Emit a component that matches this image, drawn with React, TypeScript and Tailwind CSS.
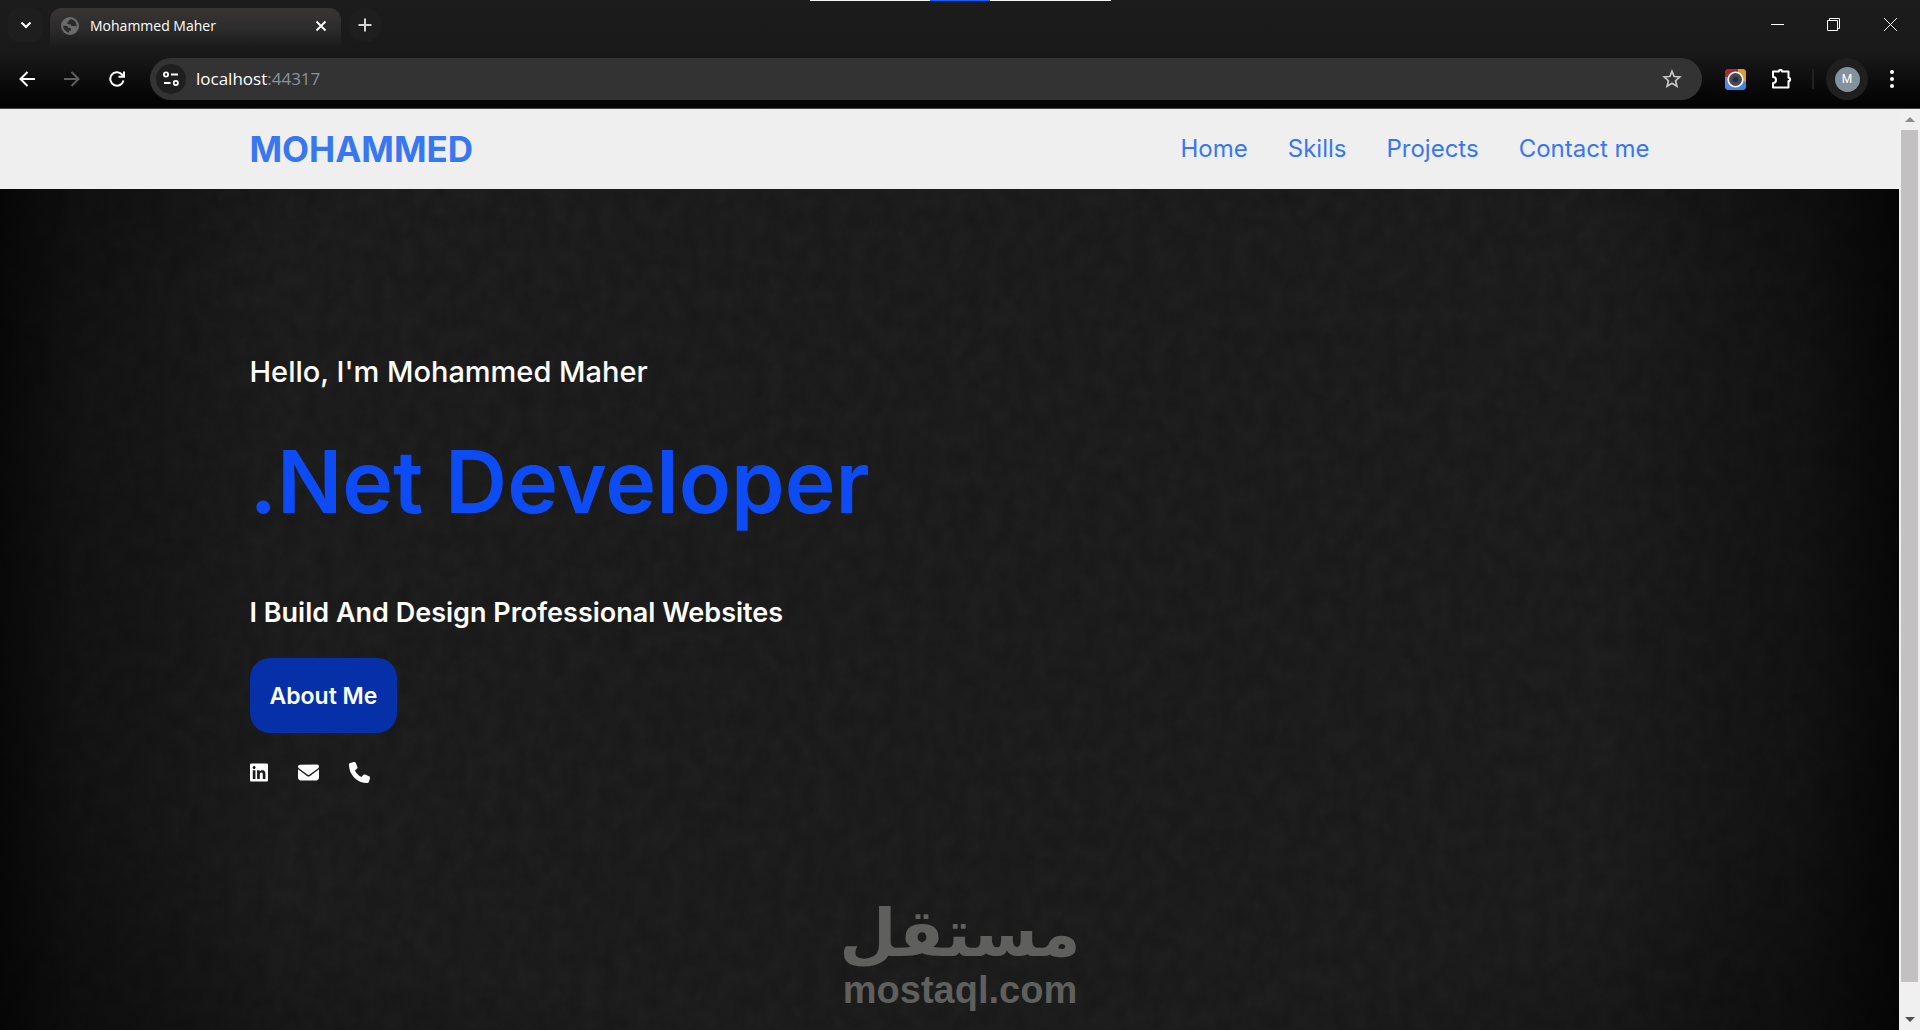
import React from 'react';
import { FaLinkedin, FaEnvelope, FaPhone } from 'react-icons/fa6';

const navLinks = [
  { label: 'Home', href: '#home' },
  { label: 'Skills', href: '#skills' },
  { label: 'Projects', href: '#projects' },
  { label: 'Contact me', href: '#contact' },
];

const socials = [
  { label: 'LinkedIn', href: '#linkedin', icon: <FaLinkedin className="w-[18px] h-[21px]" /> },
  { label: 'Email', href: '#email', icon: <FaEnvelope className="w-[21px] h-[21px]" /> },
  { label: 'Phone', href: '#phone', icon: <FaPhone className="w-[21px] h-[21px]" /> },
];

const TabStrip: React.FC = () => (
  <div className="relative flex items-center h-[50px] pl-2">
    <div className="absolute top-0 inset-x-0 mx-auto w-[301px] h-px bg-gray-100 flex justify-center">
      <div className="w-[60px] h-px bg-blue-600" />
    </div>
    <button aria-label="Search tabs" className="w-[35px] h-[34px] rounded-xl bg-[#1e1e1e] flex items-center justify-center">
      <svg className="w-3 h-3" viewBox="0 0 12 12" fill="none" stroke="white" strokeWidth="2.2">
        <path d="M1.500 3.500L6 8l4.500-4.500" />
      </svg>
    </button>
    <div className="ml-[7px] mt-2 h-[42px] w-[291px] pl-[11px] pr-3 pb-1.5 rounded-t-xl bg-gradient-to-b from-[#3a3535] via-[#2b2b2b] to-[#181818] flex items-center gap-[11px]">
      <svg className="w-[18px] h-[18px]" viewBox="0 0 18 18">
        <circle cx="9" cy="9" r="9" fill="#6b6b6b" />
        <path
          d="M10.500 2.300C9 2.200 7.800 3 7.600 4.200 7.500 5 6.200 5.200 6.200 6.200c0 .9 1 1 2.400 1 1.600 0 1.700 1 1.700 1.900h3.300c1 0 1.400.6 2 1 .4-3.500-1.200-6.600-5.100-7.800zM2.100 8.800c.2 3.600 2.600 6.100 6 6.800v-1.800c1.500 0 2-.7 2-1.600 0-1.200-1-1.500-2-1.500H7c-.1-1.400-1-1.900-2.200-1.900z"
          fill="#2b2b2b"
        />
      </svg>
      <span className="flex-1 text-sm text-white font-['Open_Sans',sans-serif]">Mohammed Maher</span>
      <button aria-label="Close tab" className="w-4 h-4 flex items-center justify-center">
        <svg className="w-3 h-3" viewBox="0 0 12 12" stroke="white" strokeWidth="1.800">
          <path d="M1.500 1.500l9 9M10.500 1.500l-9 9" />
        </svg>
      </button>
    </div>
    <button aria-label="New tab" className="ml-[7px] w-[34px] h-[34px] rounded-full bg-[#1e1e1e] flex items-center justify-center">
      <svg className="w-[14px] h-[14px]" viewBox="0 0 14 14" stroke="#d5d5d5" strokeWidth="2">
        <path d="M7 .5v13M.5 7h13" />
      </svg>
    </button>
    <div className="ml-auto flex h-[49px] self-start">
      <button aria-label="Minimize" className="w-14 flex items-center justify-center">
        <svg className="w-[13px] h-[13px]" viewBox="0 0 13 13" stroke="white">
          <path d="M0 6.500h13" />
        </svg>
      </button>
      <button aria-label="Restore" className="w-14 flex items-center justify-center">
        <svg className="w-[13px] h-[13px]" viewBox="0 0 13 13" fill="none" stroke="white">
          <path d="M.5 2.500h10v10h-10zM2.500 2.500v-2h10v10h-2" />
        </svg>
      </button>
      <button aria-label="Close" className="w-[59px] flex items-center justify-center">
        <svg className="w-[13px] h-[13px]" viewBox="0 0 13 13" stroke="white">
          <path d="M0 0l13 13M13 0L0 13" />
        </svg>
      </button>
    </div>
  </div>
);

const Toolbar: React.FC = () => (
  <div className="flex items-center h-[58px] pl-[11px] pr-4">
    <div className="flex items-center gap-[13px]">
      <button aria-label="Back" className="w-8 h-8 flex items-center justify-center">
        <svg className="w-4 h-4" viewBox="0 0 16 16" fill="none" stroke="white" strokeWidth="2">
          <path d="M16 8H2M8.500 1L1.500 8l7 7" />
        </svg>
      </button>
      <button aria-label="Forward" className="w-8 h-8 flex items-center justify-center">
        <svg className="w-4 h-4" viewBox="0 0 16 16" fill="none" stroke="#5f5f5f" strokeWidth="2">
          <path d="M0 8h14M7.500 1l7 7-7 7" />
        </svg>
      </button>
      <button aria-label="Reload" className="w-8 h-8 flex items-center justify-center">
        <svg className="w-4 h-4" viewBox="0 0 16 16" fill="none" stroke="white" strokeWidth="2">
          <path d="M14.500 9.500A6.700 6.700 0 1 1 13 3.500l1.500 1.800M15 .5v5.300H9.500" />
        </svg>
      </button>
    </div>
    <div className="ml-[17px] flex-1 h-[42px] rounded-full bg-[#333333] flex items-center pl-1.5 pr-5">
      <button aria-label="View site information" className="w-[30px] h-[30px] rounded-full bg-[#1f1f1f] flex items-center justify-center">
        <svg className="w-4 h-4" viewBox="0 0 16 16" fill="none" stroke="white" strokeWidth="1.800">
          <circle cx="3" cy="3.500" r="2.100" />
          <path d="M8 3.500h7M1 12h6.500" />
          <circle cx="12.800" cy="12" r="2.100" />
        </svg>
      </button>
      <div className="ml-2.5 flex-1 text-[17px] leading-6 text-white font-['Open_Sans',sans-serif]">
        localhost<span className="text-[#8a929c]">:44317</span>
      </div>
      <button aria-label="Bookmark this tab">
        <svg className="w-5 h-5" viewBox="0 0 20 20" fill="none" stroke="#c7c7c7" strokeWidth="1.700">
          <path d="M10 2.300l2.200 5.200 5.600.5-4.200 3.700 1.300 5.500-4.900-2.900-4.900 2.900 1.300-5.500L2.200 8l5.600-.5z" />
        </svg>
      </button>
    </div>
    <button aria-label="Screenshot extension" className="ml-[23px]">
      <svg className="w-[21px] h-[21px]" viewBox="0 0 21 21">
        <defs>
          <clipPath id="ext">
            <rect width="21" height="21" rx="4" />
          </clipPath>
        </defs>
        <g clipPath="url(#ext)">
          <rect width="21" height="21" fill="#3b7af0" />
          <path d="M0 0h14l-4 10H0z" fill="#b3262b" />
          <path d="M13 0h8v14l-8-4z" fill="#d9993c" />
          <path d="M0 8h10v13H0z" fill="#5b82e8" />
          <path d="M10 10l11 3v8H7z" fill="#3f86dd" />
        </g>
        <circle cx="10.500" cy="10.500" r="7.300" fill="#4a4a4e" stroke="white" strokeWidth="1.600" />
        <circle cx="10.500" cy="10.500" r="2.800" fill="#1d2b50" />
      </svg>
    </button>
    <button aria-label="Extensions" className="ml-[25px]">
      <svg className="w-[21px] h-[21px]" viewBox="0 0 21 21" fill="none" stroke="white" strokeWidth="2" strokeLinejoin="round">
        <path d="M2 2.500h5.800a1.600 1.600 0 0 1 3.200 0H17.500v6.300a1.600 1.600 0 0 1 0 3.200V18.500H2v-4.500a2.800 2.800 0 0 0 0-6z" />
      </svg>
    </button>
    <div className="ml-5 w-0.5 h-5 bg-[#222222]" />
    <button aria-label="Profile" className="ml-3 w-[42px] h-[42px] rounded-full bg-[#1f1f1f] flex items-center justify-center">
      <span className="w-[25px] h-[25px] rounded-full bg-[#84929b] text-white text-xs font-['Roboto',sans-serif] flex items-center justify-center">M</span>
    </button>
    <button aria-label="Menu" className="ml-3 w-6 flex justify-center">
      <svg className="w-1 h-[18px]" viewBox="0 0 4 18" fill="white">
        <circle cx="2" cy="2" r="2" />
        <circle cx="2" cy="9" r="2" />
        <circle cx="2" cy="16" r="2" />
      </svg>
    </button>
  </div>
);

const ScrollBar: React.FC = () => (
  <div className="w-[21px] shrink-0 bg-[#f0f0f0] flex flex-col items-center">
    <div className="h-[21px] flex items-center">
      <svg className="w-2.5 h-[5px]" viewBox="0 0 10 5" fill="#8b8b8b">
        <path d="M0 5l5-5 5 5z" />
      </svg>
    </div>
    <div className="w-[17px] flex-1 bg-[#c2c0c1]" />
    <div className="h-12 flex items-end pb-2">
      <svg className="w-2.5 h-[5px]" viewBox="0 0 10 5" fill="#505050">
        <path d="M0 0l5 5 5-5z" />
      </svg>
    </div>
  </div>
);

const Header: React.FC = () => (
  <header className="bg-[#efefef] px-6">
    <div className="mx-auto w-full max-w-[1400px] h-20 flex items-center justify-between text-[#3877f2]">
      <a href="#home" className="text-[35px] leading-10 font-bold">MOHAMMED</a>
      <nav className="flex gap-10">
        {navLinks.map((link) => (
          <a key={link.label} href={link.href} className="text-2xl">
            {link.label}
          </a>
        ))}
      </nav>
    </div>
  </header>
);

const Hero: React.FC = () => (
  <section className="relative flex-1 px-6 bg-[#1e1e1e] overflow-hidden">
    <svg className="absolute inset-0 w-full h-full opacity-15" aria-hidden="true">
      <filter id="grain">
        <feTurbulence type="fractalNoise" baseFrequency="0.06 0.05" numOctaves="4" seed="4" />
        <feColorMatrix type="matrix" values="0 0 0 0 0  0 0 0 0 0  0 0 0 0 0  1.800 0 0 0 -0.500" />
      </filter>
      <rect width="100%" height="100%" filter="url(#grain)" />
    </svg>
    <div className="absolute inset-0 bg-[linear-gradient(90deg,rgba(0,0,0,0.7)_0%,rgba(0,0,0,0.35)_4%,transparent_15%,transparent_84%,rgba(0,0,0,0.35)_95%,rgba(0,0,0,0.75)_100%)]" />
    <div className="absolute inset-0 bg-[radial-gradient(ellipse_75%_85%_at_50%_45%,transparent_65%,rgba(0,0,0,0.4)_100%)]" />
    <div className="relative mx-auto w-full max-w-[1400px] pt-[163px] pb-6 text-white">
      <h3 className="text-[29px] leading-10 font-medium">Hello, I'm Mohammed Maher</h3>
      <h1 className="mt-[30px] text-[86px] leading-[120px] font-semibold text-[#0d4bf5]">.Net Developer</h1>
      <h3 className="mt-[51px] text-[27px] leading-10 font-semibold">I Build And Design Professional Websites</h3>
      <button className="mt-[25px] px-5 h-[75px] rounded-[20px] bg-[#0530a8] text-[23px] leading-8 font-semibold">
        About Me
      </button>
      <div className="mt-[29px] flex items-center gap-[30px]">
        {socials.map((s) => (
          <a key={s.label} href={s.href} aria-label={s.label}>
            {s.icon}
          </a>
        ))}
      </div>
    </div>
  </section>
);

const Watermark: React.FC = () => (
  <div className="absolute inset-x-0 bottom-4 flex flex-col items-center font-bold text-[#5f5f5d] pointer-events-none">
    <span dir="rtl" lang="ar" className="text-[66px] leading-[64px] font-['DejaVu_Sans',sans-serif]">مستقل</span>
    <span className="text-[38px] leading-[48px] font-['Liberation_Sans',sans-serif]">mostaql.com</span>
  </div>
);

const App: React.FC = () => (
  <div className="relative min-h-screen flex flex-col bg-black">
    <div className="bg-gradient-to-b from-[#1c1c1c] via-[#191919] to-[#030303] border-b border-[#4a4646]">
      <TabStrip />
      <Toolbar />
    </div>
    <div className="flex-1 flex">
      <main className="flex-1 flex flex-col font-['Inter',sans-serif]">
        <Header />
        <Hero />
      </main>
      <ScrollBar />
    </div>
    <Watermark />
  </div>
);

export default App;
